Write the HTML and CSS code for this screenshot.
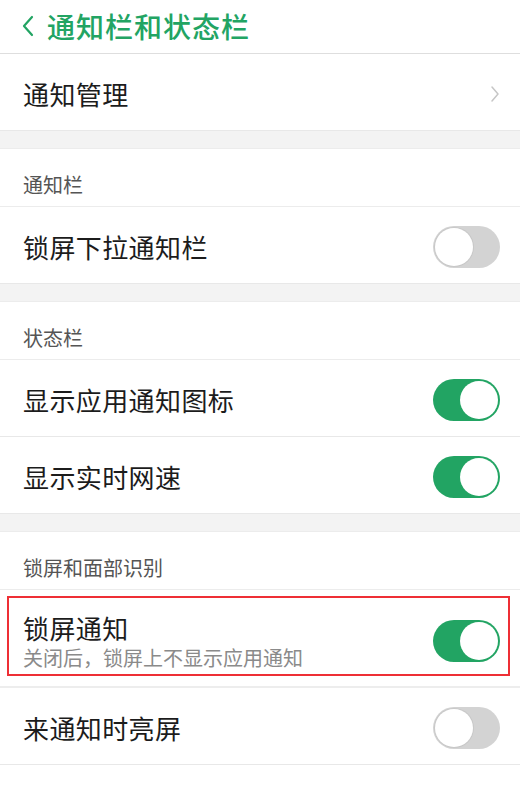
FILE: index.html
```html
<!DOCTYPE html>
<html lang="zh-CN">
<head>
<meta charset="utf-8">
<title>通知栏和状态栏</title>
<link rel="stylesheet" href="styles.css">
</head>
<body>
<div class="page">
  <header class="topbar">
    <svg class="back" width="14" height="22" viewBox="0 0 14 22"><path d="M11 2 L3 11 L11 20" fill="none" stroke="#22a463" stroke-width="2.2" stroke-linecap="round" stroke-linejoin="round"/></svg>
    <h1 class="title">通知栏和状态栏</h1>
  </header>

  <div class="row">
    <span class="label">通知管理</span>
    <svg class="chev" width="10" height="18" viewBox="0 0 10 18"><path d="M2 2 L8 9 L2 16" fill="none" stroke="#c6c6c6" stroke-width="1.5" stroke-linecap="round" stroke-linejoin="round"/></svg>
  </div>

  <div class="gap"></div>
  <div class="section-head">通知栏</div>
  <div class="row">
    <span class="label">锁屏下拉通知栏</span>
    <span class="toggle off"><span class="knob"></span></span>
  </div>

  <div class="gap"></div>
  <div class="section-head">状态栏</div>
  <div class="row">
    <span class="label">显示应用通知图标</span>
    <span class="toggle on"><span class="knob"></span></span>
  </div>
  <div class="row">
    <span class="label">显示实时网速</span>
    <span class="toggle on"><span class="knob"></span></span>
  </div>

  <div class="gap"></div>
  <div class="section-head">锁屏和面部识别</div>
  <div class="row row-tall">
    <div class="texts">
      <span class="label">锁屏通知</span>
      <span class="sub">关闭后，锁屏上不显示应用通知</span>
    </div>
    <span class="toggle on"><span class="knob"></span></span>
    <div class="highlight"></div>
  </div>
  <div class="row">
    <span class="label">来通知时亮屏</span>
    <span class="toggle off"><span class="knob"></span></span>
  </div>
</div>
</body>
</html>
```

FILE: styles.css
```css
* { box-sizing: border-box; }
html, body {
  margin: 0;
  padding: 0;
  background: #ffffff;
}
body {
  font-family: "Noto Sans CJK SC", "Noto Sans", sans-serif;
  color: #1c1c1c;
}
.page {
  width: 520px;
  display: flex;
  flex-direction: column;
}
.topbar {
  height: 54px;
  display: flex;
  align-items: center;
  padding-left: 21px;
  padding-bottom: 2px;
  border-bottom: 1px solid #dedede;
  gap: 12px;
}
.back { flex: none; }
.title {
  margin: 0;
  font-size: 28px;
  line-height: 34px;
  font-weight: 500;
  color: #22a463;
  letter-spacing: 1px;
}
.row {
  position: relative;
  height: 77px;
  display: flex;
  align-items: center;
  justify-content: space-between;
  padding: 3px 20px 0 23px;
  border-bottom: 1px solid #e8e8e8;
}
.label {
  font-size: 26px;
  line-height: 33px;
  color: #1c1c1c;
  letter-spacing: 0.4px;
}
.gap {
  height: 18px;
  background: #f3f3f3;
  border-bottom: 1px solid #ececec;
}
.section-head {
  height: 58px;
  padding: 24px 23px 0;
  font-size: 20px;
  line-height: 24px;
  color: #555555;
  border-bottom: 1px solid #ececec;
}
.row-tall {
  height: 98px;
  padding-top: 6px;
  border-bottom: 2px solid #ededed;
}
.texts {
  display: flex;
  flex-direction: column;
}
.sub {
  font-size: 20px;
  line-height: 28px;
  color: #8a8a8a;
}
.toggle {
  position: relative;
  flex: none;
  width: 67px;
  height: 42px;
  border-radius: 21px;
  display: flex;
  align-items: center;
  padding: 0 2px;
}
.toggle.on {
  background: #22a463;
  justify-content: flex-end;
}
.toggle.off {
  background: #d3d3d3;
  justify-content: flex-start;
}
.knob {
  width: 38px;
  height: 38px;
  border-radius: 50%;
  background: #ffffff;
}
.toggle.off .knob {
  box-shadow: 0 0 0 1px #c8c8c8;
}
.highlight {
  position: absolute;
  left: 7px;
  right: 10px;
  top: 6px;
  bottom: 10px;
  border: 2px solid #ee2f35;
  pointer-events: none;
}
```
